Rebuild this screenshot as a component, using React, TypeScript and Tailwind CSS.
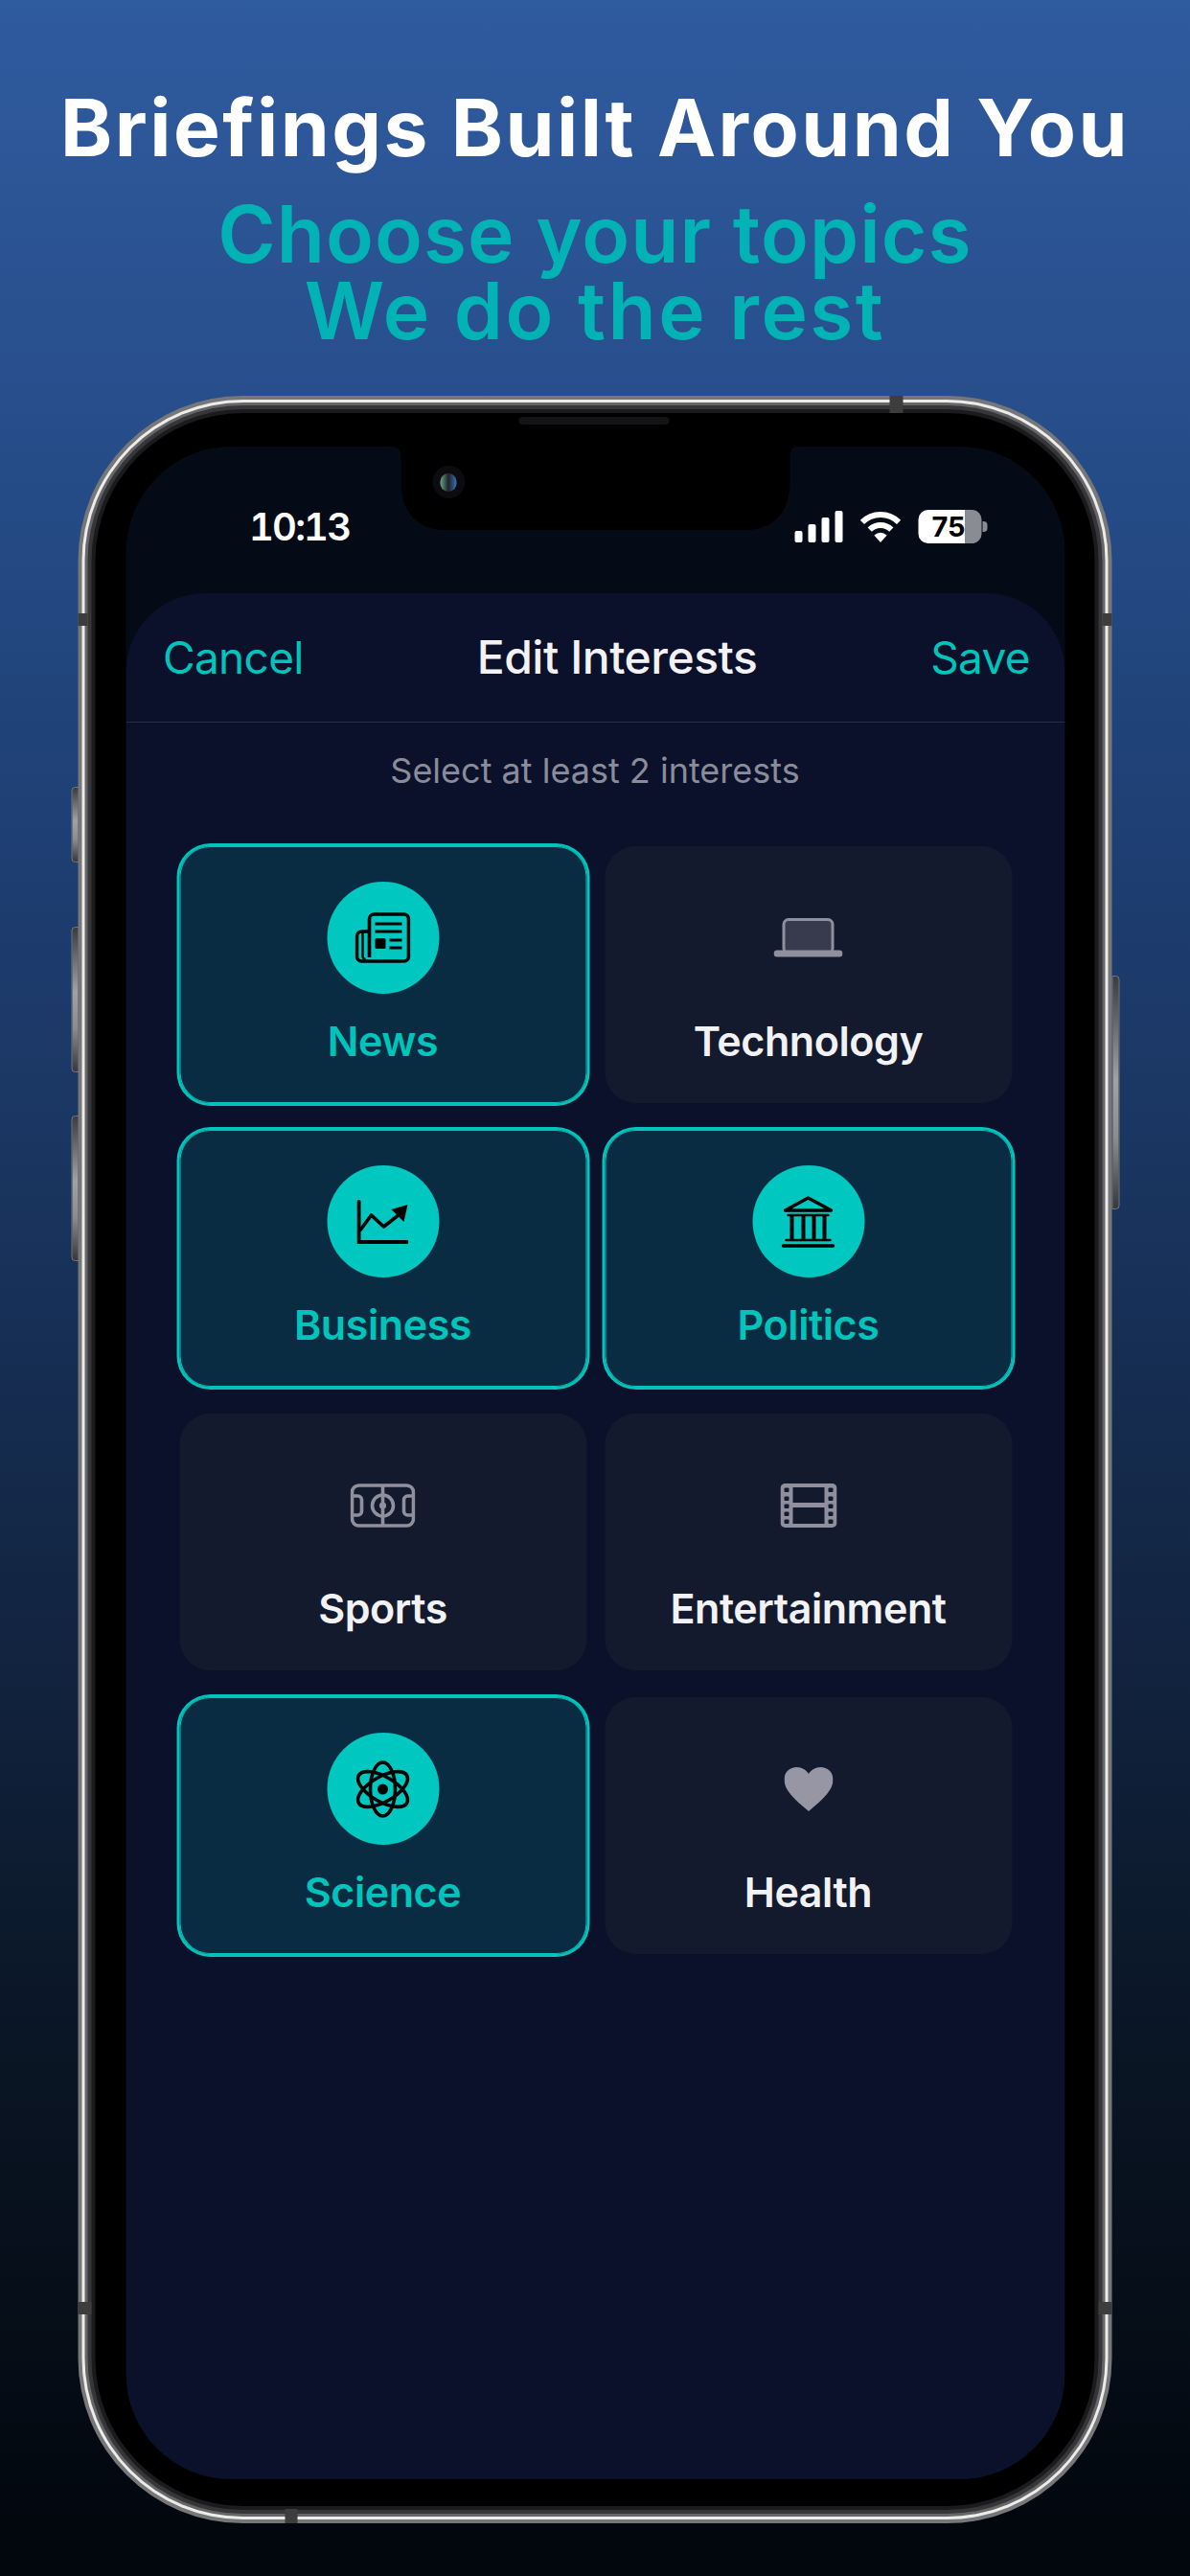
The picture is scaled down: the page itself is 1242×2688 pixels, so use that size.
import React from "react";

const gray = "#8f8f9d";
const ink = "#000000";

function Newspaper() {
  return (
    <svg width="58" height="53" viewBox="0 0 58 53" fill="none" stroke={ink} strokeWidth="3.6">
      <path d="M15 47V7a5 5 0 0 1 5-5h31a5 5 0 0 1 5 5v39a5 5 0 0 1-5 5H7a5 5 0 0 1-5-5V25a5 5 0 0 1 5-5h8" />
      <path d="M8 21v25a3 3 0 0 0 3 3" strokeWidth="2.4" />
      <path d="M21 12h28M21 20h28M36 29h13M36 37h13" strokeWidth="2.8" />
      <rect x="21" y="27" width="11" height="11" rx="1.5" fill={ink} stroke="none" />
    </svg>
  );
}

function Chart() {
  return (
    <svg width="54" height="46" viewBox="0 0 54 46" fill="none" stroke={ink} strokeWidth="4" strokeLinecap="round">
      <path d="M2 2V44H52" />
      <path d="M4 31L15 16L28 28L42 17" strokeWidth="3.6" strokeLinejoin="round" />
      <path d="M53 5L49 23L36 10Z" fill={ink} stroke="none" />
    </svg>
  );
}

function Bank() {
  return (
    <svg width="56" height="54" viewBox="0 0 56 54" fill="none" stroke={ink} strokeLinecap="round">
      <path d="M28 2L4 15H52Z" strokeWidth="3.4" strokeLinejoin="round" />
      <path d="M7 20H49M5 46H51" strokeWidth="2.4" />
      <path d="M11 20V46M23 20V46M34 20V46M45 20V46" strokeWidth="4" strokeLinecap="butt" />
      <path d="M2 52H54" strokeWidth="3.6" />
    </svg>
  );
}

function Atom() {
  return (
    <svg width="56" height="60" viewBox="0 0 56 60" fill="none" stroke={ink} strokeWidth="3.6">
      <ellipse cx="28" cy="30" rx="13" ry="28" />
      <ellipse cx="28" cy="30" rx="13" ry="29" transform="rotate(60 28 30)" />
      <ellipse cx="28" cy="30" rx="13" ry="29" transform="rotate(120 28 30)" />
      <circle cx="28" cy="30" r="5.5" fill={ink} stroke="none" />
    </svg>
  );
}

function Laptop() {
  return (
    <svg width="72" height="41" viewBox="0 0 72 41" fill="none">
      <rect x="10.5" y="1.5" width="51" height="35" rx="5" fill="#383a4e" stroke={gray} strokeWidth="3" />
      <rect x="0" y="33.5" width="72" height="7" rx="3.5" fill={gray} />
    </svg>
  );
}

function Pitch() {
  return (
    <svg width="68" height="46" viewBox="0 0 68 46" fill="none" stroke={gray} strokeWidth="3.6">
      <rect x="2" y="2" width="64" height="42" rx="7" />
      <path d="M34 2V44" />
      <circle cx="34" cy="23" r="11" />
      <circle cx="34" cy="23" r="3.6" fill={gray} stroke="none" />
      <path d="M2 13H8a4 4 0 0 1 4 4V29a4 4 0 0 1-4 4H2" />
      <path d="M66 13H60a4 4 0 0 0-4 4V29a4 4 0 0 0 4 4H66" />
    </svg>
  );
}

function Film() {
  const ys = [4.5, 13.5, 21.5, 29.5, 37.5];
  return (
    <svg width="59" height="46" viewBox="0 0 59 46">
      <rect x="0" y="0" width="59" height="46" rx="5" fill={gray} />
      <rect x="13" y="4" width="33" height="16" fill="#141a2e" />
      <rect x="13" y="25" width="33" height="17" fill="#141a2e" />
      {ys.map((y) => (
        <React.Fragment key={y}>
          <rect x="4" y={y} width="5" height="4.5" rx="1" fill="#141a2e" />
          <rect x="50" y={y} width="5" height="4.5" rx="1" fill="#141a2e" />
        </React.Fragment>
      ))}
    </svg>
  );
}

function Heart() {
  return (
    <svg width="51" height="46" viewBox="0 0 51 46">
      <path
        d="M25.5 46C10 33 0 24 0 13C0 5 6 0 13 0C18.5 0 23 3 25.5 7C28 3 32.5 0 38 0C45 0 51 5 51 13C51 24 41 33 25.5 46Z"
        fill="#9696a4"
      />
    </svg>
  );
}

function Signal() {
  return (
    <div className="flex items-end gap-[6px] h-[33px]">
      <div className="w-[8px] h-[12px] rounded-[2px] bg-white" />
      <div className="w-[8px] h-[19px] rounded-[2px] bg-white" />
      <div className="w-[8px] h-[26px] rounded-[2px] bg-white" />
      <div className="w-[8px] h-[33px] rounded-[2px] bg-white" />
    </div>
  );
}

function Wifi() {
  return (
    <svg width="45" height="33" viewBox="0 0 45 33" fill="none" stroke="#fff" strokeWidth="6">
      <path d="M3.4 11.9A27 27 0 0 1 41.6 11.9" />
      <path d="M11.2 19.7A16 16 0 0 1 33.8 19.7" />
      <path d="M22.5 33L15.8 25.4Q22.5 20 29.2 25.4Z" fill="#fff" stroke="none" />
    </svg>
  );
}

function Battery() {
  return (
    <div className="flex items-center gap-[1px]">
      <div className="flex items-center justify-center w-[66px] h-[35px] rounded-[10px] bg-[linear-gradient(90deg,#ffffff_0%,#ffffff_74%,#8a8c94_74%)] text-black text-[29px] font-bold leading-none pr-[2px]">
        75
      </div>
      <div className="w-[5px] h-[11px] rounded-r-[4px] bg-[#8a8c94]" />
    </div>
  );
}

type Topic = { label: string; icon: React.ReactNode; on: boolean };

const topics: Topic[] = [
  { label: "News", icon: <Newspaper />, on: true },
  { label: "Technology", icon: <Laptop />, on: false },
  { label: "Business", icon: <Chart />, on: true },
  { label: "Politics", icon: <Bank />, on: true },
  { label: "Sports", icon: <Pitch />, on: false },
  { label: "Entertainment", icon: <Film />, on: false },
  { label: "Science", icon: <Atom />, on: true },
  { label: "Health", icon: <Heart />, on: false },
];

function Card({ t }: { t: Topic }) {
  return (
    <div
      className={
        t.on
          ? "h-[268px] rounded-[32px] flex flex-col items-center pt-[37px] bg-[#0a2c42] shadow-[0_0_0_3px_#00c4bc,inset_0_0_0_1px_#00c4bc]"
          : "h-[268px] rounded-[32px] flex flex-col items-center pt-[37px] bg-[#141a2e]"
      }
    >
      <div
        className={
          t.on
            ? "w-[117px] h-[117px] rounded-full flex items-center justify-center bg-[#00c8c0]"
            : "w-[117px] h-[117px] rounded-full flex items-center justify-center"
        }
      >
        {t.icon}
      </div>
      <div
        className={
          t.on
            ? "mt-[24px] text-[43px] leading-[50px] font-semibold tracking-[-0.01em] text-[#00c4bc]"
            : "mt-[24px] text-[43px] leading-[50px] font-semibold tracking-[-0.01em] text-[#f2f2f5]"
        }
      >
        {t.label}
      </div>
    </div>
  );
}

function Band({ className }: { className: string }) {
  return <div className={"absolute bg-[#3d3d3d] " + className} />;
}

function SideButton({ className }: { className: string }) {
  return (
    <div
      className={
        "absolute w-[8px] border border-[#77777a] bg-[linear-gradient(180deg,#3c3c3e_0%,#a2a2a4_45%,#8c8c8e_70%,#38383a_100%)] " +
        className
      }
    />
  );
}

export default function App() {
  return (
    <div className="w-[1242px] h-[2688px] overflow-hidden flex flex-col items-center bg-[linear-gradient(180deg,#2f5b9f_0%,#284f8c_15%,#1f4177_30%,#1a3560_45%,#0a1524_80%,#01060c_100%)] font-['Inter',sans-serif]">
      <h1 className="mt-[87px] font-['Inter',sans-serif] text-[82px] leading-[94px] font-bold text-white tracking-[0.03em] whitespace-nowrap">
        Briefings Built Around You
      </h1>
      <div className="mt-[24px] text-center text-[#02b3b6] text-[82px] leading-[80px] font-semibold whitespace-nowrap">
        <div className="tracking-[0.013em]">Choose your topics</div>
        <div className="tracking-[0.03em]">We do the rest</div>
      </div>

      <div className="relative mt-[48px] w-[1079px] h-[2220px] -translate-x-[0.5px]">
        <SideButton className="left-[-7px] top-[408px] h-[79px] rounded-l-[4px]" />
        <SideButton className="left-[-7px] top-[554px] h-[152px] rounded-l-[4px]" />
        <SideButton className="left-[-7px] top-[751px] h-[152px] rounded-l-[4px]" />
        <SideButton className="right-[-8px] top-[605px] h-[244px] rounded-r-[4px]" />

        <div className="w-full h-full rounded-[172px] bg-[#77777a] p-[4px]">
          <div className="w-full h-full rounded-[168px] bg-[#ecece8] p-[3px]">
            <div className="w-full h-full rounded-[165px] bg-[#66666a] p-[3px]">
              <div className="w-full h-full rounded-[162px] bg-[#363638] p-[4px]">
                <div className="w-full h-full rounded-[158px] bg-[#1b1b1d] p-[4px]">
                  <div className="w-full h-full rounded-[154px] bg-black pt-[35px] pb-[27px] pl-[32px] pr-[31px]">
                    <div className="relative w-[980px] h-[2121px] rounded-[110px] overflow-hidden bg-[#050a17] flex flex-col">
                      <div className="h-[153px] shrink-0 flex justify-between items-start pt-[66px] pl-[129px] pr-[81px]">
                        <div className="text-[40px] leading-[36px] font-semibold text-white tracking-[-0.045em] tabular-nums">
                          10:13
                        </div>
                        <div className="flex items-center gap-[17px]">
                          <Signal />
                          <Wifi />
                          <Battery />
                        </div>
                      </div>

                      <div className="flex-1 rounded-t-[82px] bg-[#0b102b] flex flex-col">
                        <div className="h-[135px] shrink-0 border-b border-[#2a2e45] flex items-center justify-between pl-[39px] pr-[36px]">
                          <div className="text-[46px] leading-[56px] tracking-[-0.015em] text-[#00c4bc]">Cancel</div>
                          <div className="text-[48px] leading-[56px] font-medium tracking-[-0.01em] text-[#f2f2f5]">
                            Edit Interests
                          </div>
                          <div className="text-[46px] leading-[56px] tracking-[-0.015em] text-[#00c4bc]">Save</div>
                        </div>
                        <div className="mt-[29px] text-center text-[36px] leading-[42px] text-[#8a8c9a]">
                          Select at least 2 interests
                        </div>
                        <div className="mt-[58px] grid grid-cols-2 gap-x-[19px] gap-y-[28px] pl-[56px] pr-[55px]">
                          {topics.map((t) => (
                            <Card key={t.label} t={t} />
                          ))}
                        </div>
                      </div>

                      <svg className="absolute left-[277px] top-0" width="426" height="87" viewBox="0 0 426 87">
                        <path
                          d="M0 0C7 0 10 3 10 10V38C10 70 30 87 55 87H371C396 87 416 70 416 38V10C416 3 419 0 426 0Z"
                          fill="#000"
                        />
                      </svg>
                      <div className="absolute left-[320px] top-[20px] w-[34px] h-[34px] rounded-full bg-[#0c0c10] flex items-center justify-center">
                        <div className="w-[17px] h-[19px] rounded-full bg-[linear-gradient(90deg,#6f9f8c_0%,#1a2426_50%,#3f6fb5_100%)]" />
                      </div>
                    </div>
                  </div>
                </div>
              </div>
            </div>
          </div>
        </div>

        <div className="absolute left-[460px] top-[22px] w-[157px] h-[8px] rounded-full bg-[#141416]" />
        <Band className="left-0 top-[227px] w-[10px] h-[13px]" />
        <Band className="right-0 top-[227px] w-[10px] h-[13px]" />
        <Band className="left-0 top-[1989px] w-[14px] h-[13px]" />
        <Band className="right-0 top-[1989px] w-[14px] h-[13px]" />
        <Band className="left-[847px] top-0 w-[14px] h-[18px]" />
        <Band className="left-[216px] bottom-0 w-[13px] h-[15px]" />
      </div>
    </div>
  );
}
